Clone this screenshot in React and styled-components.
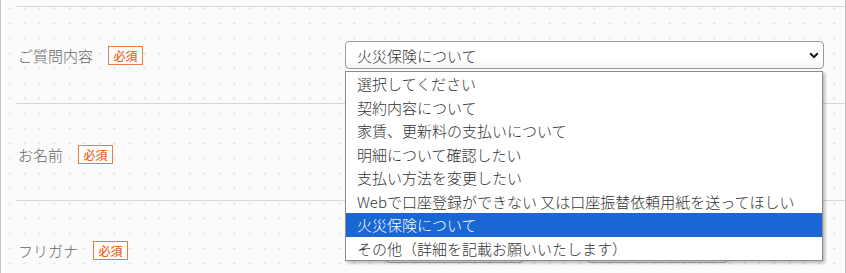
import styled, { createGlobalStyle } from 'styled-components'

const GlobalStyle = createGlobalStyle`
  html, body {
    margin: 0;
    padding: 0;
    background: #fff;
  }
  body {
    font-family: "Noto Sans CJK JP", "Noto Sans", sans-serif;
  }
`

const Frame = styled.div`
  position: relative;
  width: 844px;
  height: 271px;
  overflow: hidden;
  border-left: 1px solid #c4c4c4;
  border-right: 1px solid #c4c4c4;
  border-bottom: 1px solid #c4c4c4;
  background-color: #fbfbfb;
  background-image: radial-gradient(circle, #e2e2e2 0.9px, transparent 1.2px);
  background-size: 15px 15px;
  background-position: 1px 1px;
  padding-top: 6px;
`

const Row = styled.div`
  display: grid;
  grid-template-columns: 329px 1fr;
  align-items: center;
  margin-left: 15px;
  padding-right: 21px;
  height: 96px;
  border-top: 1px solid #d6d6d6;
`

const Label = styled.div`
  display: flex;
  align-items: center;
  gap: 15px;
  padding-left: 2px;
  padding-top: ${(p) => p.$shift || 0}px;
  font-size: 15px;
  font-weight: 300;
  color: #666;
`

const Badge = styled.span`
  display: inline-block;
  padding: 0 4.5px;
  border: 1px solid #ef7a42;
  background: #fff;
  color: #e8652a;
  font-size: 12px;
  font-weight: 500;
  line-height: 17px;
`

const Field = styled.div`
  position: relative;
  display: flex;
  align-items: center;
  gap: 63px;
`

const SelectWrap = styled.div`
  position: relative;
  flex: 1;
`

const SelectBox = styled.div`
  display: flex;
  align-items: center;
  justify-content: space-between;
  box-sizing: border-box;
  height: 28px;
  padding: 0 4px 0 11px;
  border: 1px solid #9a9a9a;
  border-radius: 4px;
  background: linear-gradient(#fff 70%, #f3f3f3);
  font-size: 15px;
  font-weight: 300;
  color: #333;
`

const OptionList = styled.ul`
  position: absolute;
  top: 30px;
  left: 0;
  right: 1px;
  margin: 0;
  padding: 0;
  list-style: none;
  background: #fff;
  border: 1px solid #8c8c8c;
  box-shadow: 2px 2px 3px rgba(0, 0, 0, 0.28);
  z-index: 5;
`

const Option = styled.li`
  height: 23.5px;
  line-height: 23.5px;
  padding-left: 11px;
  font-size: 15px;
  font-weight: 300;
  color: ${(p) => (p.$active ? '#fff' : '#333')};
  background: ${(p) => (p.$active ? '#1967d2' : 'transparent')};
  white-space: nowrap;
`

const TextInput = styled.div`
  box-sizing: border-box;
  width: ${(p) => p.$w}px;
  height: 28px;
  margin-left: ${(p) => p.$left || 0}px;
  margin-top: ${(p) => p.$down || 0}px;
  border: 1px solid #a8a8a8;
  border-radius: 4px;
  background: #fff;
`

const Chevron = () => (
  <svg width="10" height="7" viewBox="0 0 10 7">
    <path d="M1.2 1.3 L5 5.1 L8.8 1.3" fill="none" stroke="#111" strokeWidth="2" />
  </svg>
)

const options = [
  '選択してください',
  '契約内容について',
  '家賃、更新料の支払いについて',
  '明細について確認したい',
  '支払い方法を変更したい',
  'Webで口座登録ができない 又は口座振替依頼用紙を送ってほしい',
  '火災保険について',
  'その他（詳細を記載お願いいたします）',
]

const App = () => {
  const selected = '火災保険について'
  return (
    <>
      <GlobalStyle />
      <Frame>
        <Row>
          <Label $shift={1}>
            ご質問内容
            <Badge>必須</Badge>
          </Label>
          <Field>
            <SelectWrap>
              <SelectBox>
                <span>{selected}</span>
                <Chevron />
              </SelectBox>
              <OptionList>
                {options.map((o) => (
                  <Option key={o} $active={o === selected}>
                    {o}
                  </Option>
                ))}
              </OptionList>
            </SelectWrap>
          </Field>
        </Row>
        <Row>
          <Label $shift={4}>
            お名前
            <Badge>必須</Badge>
          </Label>
          <Field>
            <TextInput $w={139} $left={40} $down={2} />
            <TextInput $w={141} $down={2} />
          </Field>
        </Row>
        <Row>
          <Label $shift={3}>
            フリガナ
            <Badge>必須</Badge>
          </Label>
          <Field>
            <TextInput $w={139} $left={40} $down={-1} />
            <TextInput $w={141} $down={-1} />
          </Field>
        </Row>
      </Frame>
    </>
  )
}

export default App
